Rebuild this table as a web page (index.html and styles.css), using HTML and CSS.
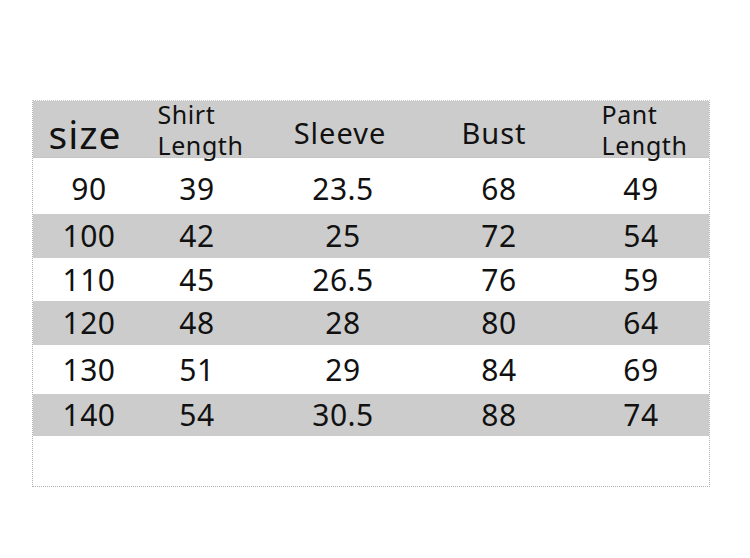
FILE: index.html
```html
<!DOCTYPE html>
<html>
<head>
<meta charset="utf-8">
<link rel="stylesheet" href="styles.css">
</head>
<body>
<div class="chart">
  <div class="row head">
    <div class="cell c1"><span class="size">size</span></div>
    <div class="cell c2"><span class="two">Shirt<br>Length</span></div>
    <div class="cell c3"><span class="one sleeve">Sleeve</span></div>
    <div class="cell c4"><span class="one bust">Bust</span></div>
    <div class="cell c5"><span class="two">Pant<br>Length</span></div>
  </div>
  <div class="row r90"><div class="cell c1">90</div><div class="cell c2">39</div><div class="cell c3">23.5</div><div class="cell c4">68</div><div class="cell c5">49</div></div>
  <div class="row gray r100"><div class="cell c1">100</div><div class="cell c2">42</div><div class="cell c3">25</div><div class="cell c4">72</div><div class="cell c5">54</div></div>
  <div class="row r110"><div class="cell c1">110</div><div class="cell c2">45</div><div class="cell c3">26.5</div><div class="cell c4">76</div><div class="cell c5">59</div></div>
  <div class="row gray r120"><div class="cell c1">120</div><div class="cell c2">48</div><div class="cell c3">28</div><div class="cell c4">80</div><div class="cell c5">64</div></div>
  <div class="row r130"><div class="cell c1">130</div><div class="cell c2">51</div><div class="cell c3">29</div><div class="cell c4">84</div><div class="cell c5">69</div></div>
  <div class="row gray r140"><div class="cell c1">140</div><div class="cell c2">54</div><div class="cell c3">30.5</div><div class="cell c4">88</div><div class="cell c5">74</div></div>
</div>
</body>
</html>
```
FILE: styles.css
```css
html, body {
  margin: 0;
  padding: 0;
  background: #ffffff;
}
body {
  font-family: "Noto Sans", "Open Sans", sans-serif;
  color: #111111;
}
.chart {
  margin: 100px 0 0 32px;
  width: 678px;
  height: 387px;
  border-left: 1px dotted #b0b0b0;
  border-right: 1px dotted #b0b0b0;
  border-bottom: 1px dotted #b0b0b0;
  border-top: 1px dotted #c4c4c4;
  box-sizing: border-box;
  display: flex;
  flex-direction: column;
}
.row {
  display: grid;
  grid-template-columns: 112px 104px 188px 124px 148px;
  align-items: center;
  font-size: 30px;
  letter-spacing: 0.5px;
}
.cell {
  text-align: center;
  line-height: 1.33;
}
.c5 { padding-left: 12px; }
.head {
  background: #cccccc;
  height: 57px;
  border-bottom: 1px dotted #c0c0c0;
  box-sizing: border-box;
  overflow: visible;
}
.size {
  font-size: 39px;
  letter-spacing: 1px;
  display: inline-block;
  padding-top: 2px;
  padding-right: 8px;
}
.one {
  font-size: 29px;
  letter-spacing: 1px;
  display: inline-block;
  padding-top: 2px;
}
.sleeve { padding-right: 6px; }
.bust { padding-right: 10px; }
.two {
  display: inline-block;
  text-align: left;
  font-size: 25px;
  letter-spacing: 0.6px;
  line-height: 31px;
  margin-top: -2px;
  padding-left: 7px;
}
.gray { background: #cccccc; }
.r90 { height: 56px; padding-top: 6px; box-sizing: border-box; }
.r100 { height: 44px; }
.r110 { height: 43px; }
.r120 { height: 44px; }
.r130 { height: 49px; }
.r140 { height: 42px; }
```
